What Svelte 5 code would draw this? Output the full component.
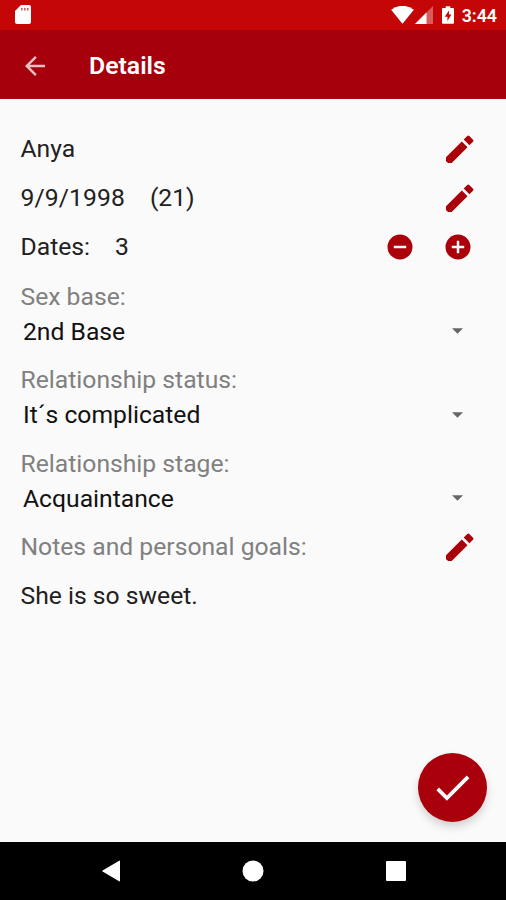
<script>
  let name = "Anya";
  let birthday = "9/9/1998";
  let age = 21;
  let dates = 3;
  let notes = "She is so sweet.";

  // Spinner fields, each one a label with the selected value below it
  const fields = [
    { label: "Sex base:", value: "2nd Base" },
    { label: "Relationship status:", value: "It´s complicated" },
    { label: "Relationship stage:", value: "Acquaintance" }
  ];

  const removeDate = () => {
    if (dates > 0) dates -= 1;
  };
  const addDate = () => {
    dates += 1;
  };
</script>

{#snippet pencil()}
  <button class="icon-btn" aria-label="Edit">
    <svg width="28" height="28" viewBox="0 0 28 28">
      <path d="M0 22.300 15.800 6.500l5.700 5.700L5.700 28H2.200L0 26.200zM17.700 4.600 21.300 1q1-1 2 0L27 4.700q1 1 0 2l-3.600 3.600z" />
    </svg>
  </button>
{/snippet}

<div class="screen">
  <div class="status-bar">
    <svg class="sd" width="16" height="20" viewBox="0 0 16 20">
      <path fill="#fff" d="M6 0h8q2 0 2 2v15q0 2-2 2H2q-2 0-2-2V6z" />
      <path fill="#c40606" d="M6 3h1.6v2.5H6zM9 3h1.6v2.5H9zM12 3h1.6v2.5H12z" opacity=".65" />
    </svg>
    <svg class="wifi" width="23" height="18" viewBox="0 0 24 19">
      <path fill="#fff" d="M0 4Q12-4.500 24 4L12.500 18.200q-.5.600-1 0z" />
    </svg>
    <svg class="signal" width="18" height="18" viewBox="0 0 18 18">
      <path fill="#fff" opacity=".35" d="M18 0v18H0z" />
      <path fill="#fff" d="M11.500 6.500V18H0z" />
    </svg>
    <svg class="battery" width="12" height="18" viewBox="0 0 13 19">
      <path fill="#fff" d="M4 0h5v2h3q1 0 1 1v15q0 1-1 1H1q-1 0-1-1V3q0-1 1-1h3z" />
      <path fill="#c40606" d="M7.500 4.500 3 11.500h2.900v4.500l4.300-7H7.500z" />
    </svg>
    <span class="clock">3:44</span>
  </div>

  <header>
    <button class="back" aria-label="Back">
      <svg width="30" height="30" viewBox="0 0 24 24">
        <path d="M20 11H7.830l5.590-5.590L12 4l-8 8 8 8 1.410-1.410L7.830 13H20v-2z" />
      </svg>
    </button>
    <h1>Details</h1>
  </header>

  <main>
    <div class="row">
      <span>{name}</span>
      {@render pencil()}
    </div>
    <div class="row">
      <span class="birthday">{birthday}</span>
      <span class="age">({age})</span>
      {@render pencil()}
    </div>
    <div class="row">
      <span class="dates">Dates:</span>
      <span>{dates}</span>
      <div class="counter">
        <button aria-label="Remove date" on:click={removeDate}>
          <svg width="30" height="30" viewBox="0 0 24 24">
            <path d="M12 2a10 10 0 1 0 0 20 10 10 0 0 0 0-20zm5 11H7v-2h10v2z" />
          </svg>
        </button>
        <button aria-label="Add date" on:click={addDate}>
          <svg width="30" height="30" viewBox="0 0 24 24">
            <path d="M12 2a10 10 0 1 0 0 20 10 10 0 0 0 0-20zm5 11h-4v4h-2v-4H7v-2h4V7h2v4h4v2z" />
          </svg>
        </button>
      </div>
    </div>

    {#each fields as field}
      <div class="field">
        <div class="label">{field.label}</div>
        <div class="select">
          <span>{field.value}</span>
          <svg width="11" height="6" viewBox="0 0 12 6"><path d="M0 0h12L6 6z" /></svg>
        </div>
      </div>
    {/each}

    <div class="row">
      <span class="label">Notes and personal goals:</span>
      {@render pencil()}
    </div>
    <div class="row"><span>{notes}</span></div>

    <button class="fab" aria-label="Save">
      <svg width="45" height="45" viewBox="0 0 24 24">
        <path d="M9 16.200 4.800 12l-1.400 1.400L9 19 21 7l-1.400-1.400L9 16.200z" />
      </svg>
    </button>
  </main>

  <nav>
    <svg width="18" height="22" viewBox="0 0 18 22"><path d="M18 1.200v19.600q0 .9-.9.400L.6 11.600q-.8-.6 0-1.200L17.100.8q.9-.5.900.4z" /></svg>
    <svg width="22" height="22" viewBox="0 0 22 22"><circle cx="11" cy="11" r="10.500" /></svg>
    <svg width="20" height="20" viewBox="0 0 20 20"><rect width="20" height="20" rx="1" /></svg>
  </nav>
</div>

<style>
  :global(body) {
    margin: 0;
  }

  .screen {
    display: flex;
    flex-direction: column;
    width: 506px;
    height: 900px;
    overflow: hidden;
    background: #fafafa;
    color: #212121;
    font-family: Roboto, "Liberation Sans", sans-serif;
    font-size: 24.7px;
  }

  svg {
    display: block;
    flex: none;
  }

  button {
    display: flex;
    align-items: center;
    justify-content: center;
    padding: 0;
    border: 0;
    background: none;
    cursor: pointer;
  }

  .status-bar {
    display: flex;
    align-items: center;
    box-sizing: border-box;
    height: 30px;
    padding: 0 9px 0 15px;
    background: #c40606;
  }
  .wifi {
    margin-left: auto;
  }
  .signal {
    margin-left: 1px;
  }
  .battery {
    margin: 0 8px 0 9px;
  }
  .clock {
    color: #fff;
    font-size: 17.8px;
    font-weight: 600;
    line-height: 30px;
    padding-top: 2px;
  }

  header {
    display: flex;
    align-items: center;
    box-sizing: border-box;
    height: 69px;
    padding: 2px 20px 0;
    background: #a5000b;
  }
  .back svg {
    fill: #fff;
    opacity: 0.75;
  }
  h1 {
    margin: 0 0 0 39px;
    color: #fff;
    font-size: 24.8px;
    font-weight: 600;
  }

  main {
    position: relative;
    flex: 1;
    padding: 25px 20px 0 20.5px;
  }
  main svg {
    fill: #a9000b;
  }

  .row {
    display: flex;
    align-items: center;
    height: 49.2px;
  }
  .icon-btn {
    margin: 0 12.5px 0 auto;
  }
  .age {
    margin-left: 25px;
  }
  .birthday {
    letter-spacing: 0.1px;
  }
  .dates + span {
    margin-left: 25px;
  }
  .counter {
    display: flex;
    gap: 28px;
    margin: 0 13px 0 auto;
  }

  .field {
    box-sizing: border-box;
    height: 83.5px;
    padding-top: 7px;
  }
  .label {
    color: #808080;
    line-height: 35px;
  }
  .select {
    display: flex;
    align-items: center;
    justify-content: space-between;
    height: 35.4px;
    padding: 0 23px 0 2.5px;
    color: #111;
  }
  .select svg {
    fill: #666;
  }

  .fab {
    position: absolute;
    right: 19px;
    bottom: 20px;
    width: 69px;
    height: 69px;
    border-radius: 50%;
    background: #a9000b;
    box-shadow: 0 5px 9px rgba(0, 0, 0, 0.16);
  }
  .fab svg {
    fill: #fff;
  }

  nav {
    display: flex;
    align-items: center;
    justify-content: space-between;
    box-sizing: border-box;
    height: 58px;
    padding: 0 100px 0 102px;
    background: #000;
  }
  nav svg {
    fill: #fff;
  }
</style>
